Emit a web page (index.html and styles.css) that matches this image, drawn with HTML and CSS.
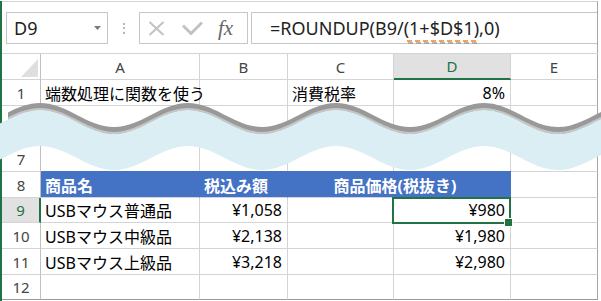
FILE: index.html
```html
<!DOCTYPE html>
<html lang="ja">
<head>
<meta charset="utf-8">
<title>ROUNDUP</title>
<link rel="stylesheet" href="styles.css">
</head>
<body>
<div class="frame">
  <div class="fbar">
    <div class="namebox"><span>D9</span><svg class="nb-arrow" width="7" height="4" viewBox="0 0 7 4"><path d="M0 0H7L3.5 4Z" fill="#7a7a7a"/></svg></div>
    <div class="dots"><i></i><i></i><i></i></div>
    <div class="iconbox">
      <svg class="ic-x" width="17" height="15" viewBox="0 0 17 15"><path d="M1.5 1L15.5 14M15.5 1L1.5 14" stroke="#c2c2c2" stroke-width="2" fill="none"/></svg>
      <svg class="ic-check" width="21" height="14" viewBox="0 0 21 14"><path d="M1 4.5L9 12.5L20 1.5" stroke="#c2c2c2" stroke-width="3" fill="none"/></svg>
      <span class="fx">fx</span>
    </div>
    <div class="formula">=ROUNDUP(B9/(<span class="ref">1+$D$1)</span>,0)</div>
  </div>
  <div class="sheet">
    <div class="c corner"><svg width="17" height="18" viewBox="0 0 17 18"><path d="M17 0V18H0Z" fill="#dfdfdf"/></svg></div>
    <div class="c ch">A</div>
    <div class="c ch">B</div>
    <div class="c ch">C</div>
    <div class="c ch act-col">D</div>
    <div class="c ch ce">E</div>

    <div class="c rh">1</div>
    <div class="c">端数処理に関数を使う</div>
    <div class="c"></div>
    <div class="c">消費税率</div>
    <div class="c n">8%</div>
    <div class="c ce"></div>

    <div class="c rh"></div>
    <div class="c"></div>
    <div class="c"></div>
    <div class="c"></div>
    <div class="c"></div>
    <div class="c ce"></div>

    <div class="c rh">7</div>
    <div class="c"></div>
    <div class="c"></div>
    <div class="c"></div>
    <div class="c"></div>
    <div class="c ce"></div>

    <div class="c rh">8</div>
    <div class="c hd">商品名</div>
    <div class="c hd">税込み額</div>
    <div class="c hd span2">商品価格(税抜き)</div>
    <div class="c ce"></div>

    <div class="c rh act-row">9</div>
    <div class="c">USBマウス普通品</div>
    <div class="c n">¥1,058</div>
    <div class="c"></div>
    <div class="c n sel">¥980</div>
    <div class="c ce"></div>

    <div class="c rh">10</div>
    <div class="c">USBマウス中級品</div>
    <div class="c n">¥2,138</div>
    <div class="c"></div>
    <div class="c n">¥1,980</div>
    <div class="c ce"></div>

    <div class="c rh">11</div>
    <div class="c">USBマウス上級品</div>
    <div class="c n">¥3,218</div>
    <div class="c"></div>
    <div class="c n">¥2,980</div>
    <div class="c ce"></div>

    <div class="c rh last">12</div>
    <div class="c last"></div>
    <div class="c last"></div>
    <div class="c last"></div>
    <div class="c last"></div>
    <div class="c ce last"></div>
  </div>
  <svg class="wave" width="601" height="301" viewBox="0 0 601 301">
    <defs><clipPath id="cl"><rect x="8" y="0" width="600" height="301"/></clipPath></defs>
    <path clip-path="url(#cl)" fill="#999999" d="M-108 102 C-81 102 -61 126 -34 126 S13 102 40 102 S87 126 114 126 S161 102 188 102 S235 126 262 126 S309 102 336 102 S383 126 410 126 S457 102 484 102 S531 126 558 126 S605 102 632 102 L632 112 C605 112 585 136 558 136 S511 112 484 112 S437 136 410 136 S363 112 336 112 S289 136 262 136 S215 112 188 112 S141 136 114 136 S67 112 40 112 S-7 136 -34 136 S-81 112 -108 112 Z"/>
    <path clip-path="url(#cl)" fill="none" stroke="#c6c6c6" stroke-width="2" d="M-108 108 C-81 108 -61 132 -34 132 S13 108 40 108 S87 132 114 132 S161 108 188 108 S235 132 262 132 S309 108 336 108 S383 132 410 132 S457 108 484 108 S531 132 558 132 S605 108 632 108"/>
    <path fill="#daeef3" d="M-108 109 C-81 109 -61 133 -34 133 S13 109 40 109 S87 133 114 133 S161 109 188 109 S235 133 262 133 S309 109 336 109 S383 133 410 133 S457 109 484 109 S531 133 558 133 S605 109 632 109 L632 145 C605 145 585 169 558 169 S511 145 484 145 S437 169 410 169 S363 145 336 145 S289 169 262 169 S215 145 188 145 S141 169 114 169 S67 145 40 145 S-7 169 -34 169 S-81 145 -108 145 Z"/>
  </svg>
</div>
</body>
</html>
```

FILE: styles.css
```css
* { box-sizing: border-box; margin: 0; padding: 0; }
html, body { width: 601px; height: 301px; overflow: hidden; background: #fff; }
body { font-family: "Noto Sans", "Noto Sans CJK JP", sans-serif; color: #000; }

.frame { position: relative; width: 598px; height: 300px; border-left: 2px solid #217346; }

.fbar {
  display: flex; align-items: flex-start;
  margin-top: 1px; height: 52px; padding-top: 10px;
  border-top: 1px solid #d4d4d4; border-right: 1px solid #a6a6a6;
}
.namebox {
  margin-left: 4px; width: 102px; height: 32px;
  border: 1px solid #c6c6c6;
  display: flex; align-items: center;
  padding: 0 6px 0 7px;
  font-size: 18px; color: #222;
}
.nb-arrow { margin-left: auto; }
.dots {
  width: 31px; height: 32px;
  display: flex; flex-direction: column; align-items: center; justify-content: center; gap: 2.5px;
}
.dots i { display: block; width: 2px; height: 2px; background: #a0a0a0; border-radius: 1px; }
.iconbox {
  width: 109px; height: 32px; border: 1px solid #c6c6c6;
  display: flex; align-items: center; padding-left: 8px;
}
.ic-check { margin-left: 17px; }
.fx { margin-left: 15px; font: italic 21px "Liberation Serif", serif; color: #666; line-height: 1; }
.formula {
  margin-left: 3px; flex: 1; height: 32px;
  border: 1px solid #c6c6c6; border-right: 0;
  display: flex; align-items: center; padding-left: 18px;
  font-size: 18px; color: #222; white-space: nowrap; line-height: 1;
}
.ref { position: relative; }
.ref::before, .ref::after {
  content: ""; position: absolute; left: -2px; right: 0; height: 2px;
  background: repeating-linear-gradient(90deg, #f5a15a 0 5px, transparent 5px 8px);
}
.ref::before { top: calc(100% + 3px); }
.ref::after {
  top: calc(100% + 5px); left: -1px;
  background: repeating-linear-gradient(90deg, #9a9a9a 0 5px, transparent 5px 8px);
  opacity: 0.7;
}

.sheet {
  display: grid;
  grid-template-columns: 39px 159px 88px 106px 117px 87px;
  grid-template-rows: 26px 26px 40px 26px 26px 25px 26px 26px 25px;
  border-top: 1px solid #d4d4d4;
}
.c {
  border-right: 1px solid #d4d4d4; border-bottom: 1px solid #d4d4d4;
  display: flex; align-items: center; padding: 0 4px;
  font-size: 16px; white-space: nowrap; min-width: 0;
}
.corner { justify-content: flex-end; align-items: flex-end; padding: 0 2px 2px 0; border-right-color: #c0c0c0; }
.corner svg { display: block; }
.ch { justify-content: center; font-size: 15px; color: #444; }
.rh { justify-content: center; font-size: 15px; color: #444; border-right-color: #c0c0c0; }
.n { justify-content: flex-end; padding-right: 5px; }
.ce { border-right-color: #a6a6a6; }
.last { border-bottom-color: #9a9a9a; }
.act-col { background: #e1e1e1; color: #217346; border-bottom: 2px solid #217346; }
.act-row { background: #e1e1e1; color: #217346; border-right: 2px solid #217346; }
.hd {
  background: #4472c4; color: #fff; font-weight: 700;
  border-right-color: #4472c4; box-shadow: 0 -1px 0 #4472c4;
}
.span2 { grid-column: span 2; justify-content: center; padding-right: 12px; }
.sel { position: relative; }
.sel::before {
  content: ""; position: absolute; left: -2px; top: -1px; right: -1px; bottom: -2px;
  border: 2px solid #217346;
}
.sel::after {
  content: ""; position: absolute; right: -3px; bottom: -5px;
  width: 7px; height: 7px; background: #217346; border: 1px solid #fff;
}

.wave { position: absolute; left: -2px; top: 0; pointer-events: none; }
```
